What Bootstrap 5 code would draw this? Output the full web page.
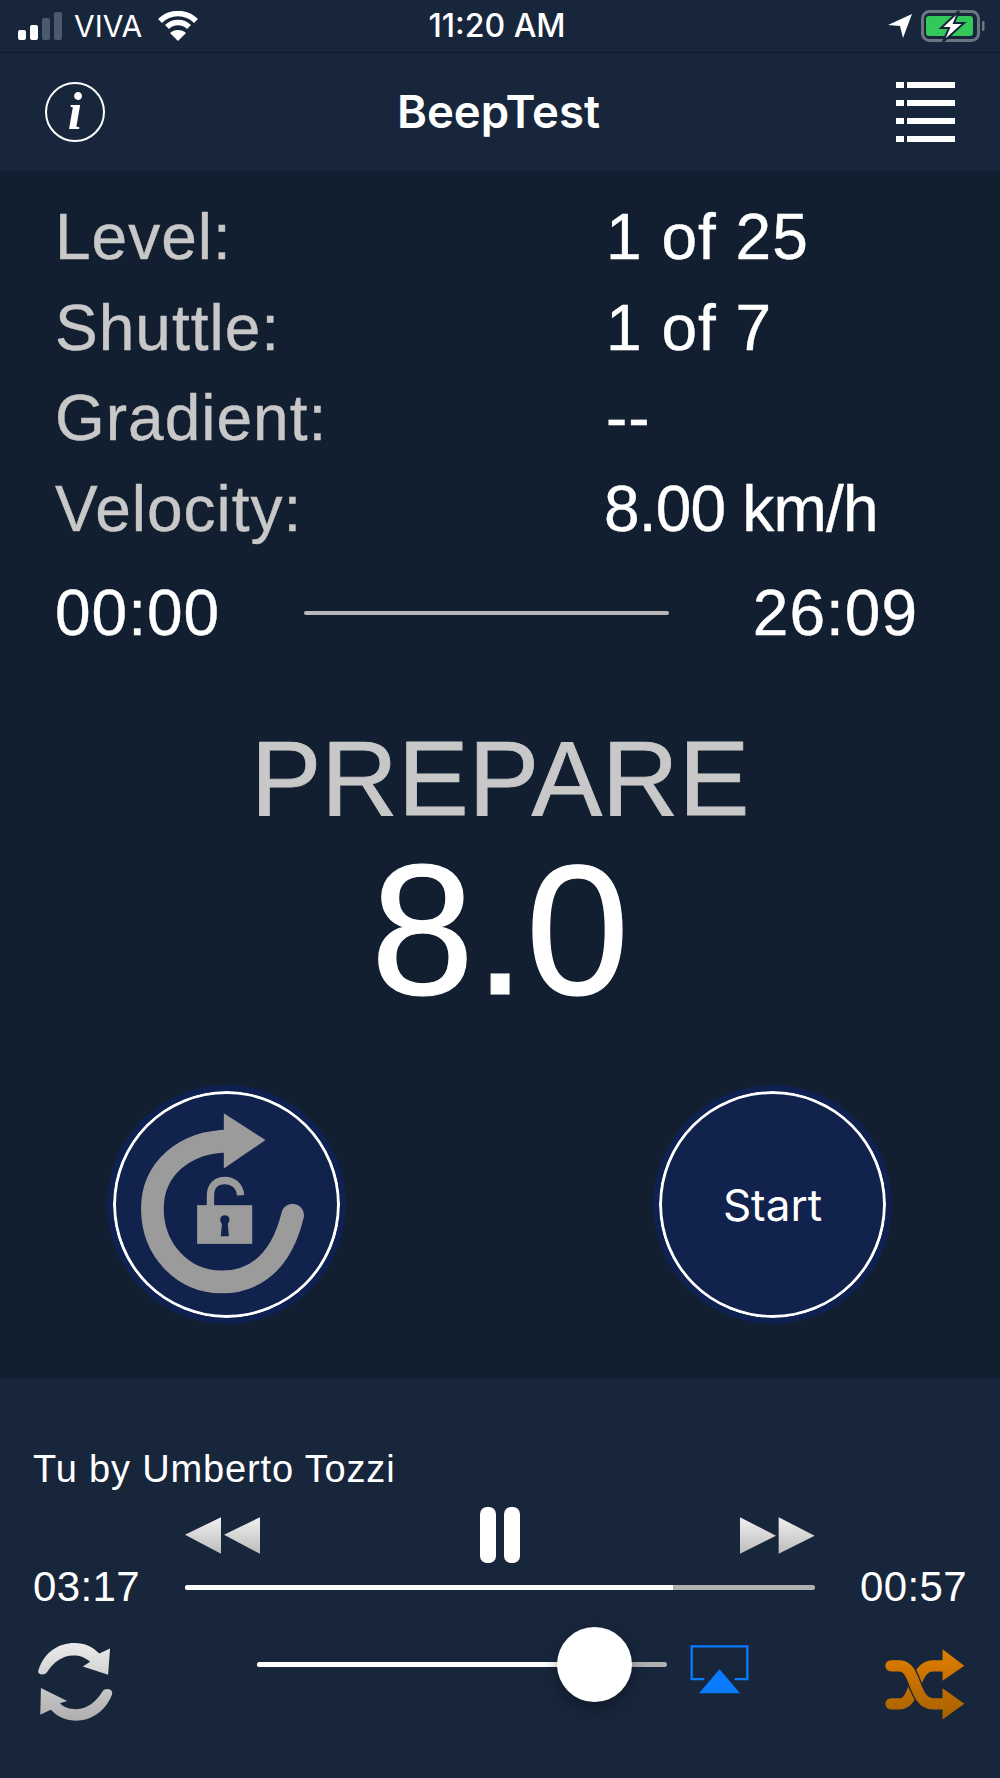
<!DOCTYPE html>
<html lang="en">
<head>
    <meta charset="UTF-8">
    <meta name="viewport" content="width=device-width, initial-scale=1.0">
    <title>BeepTest</title>
    <link rel="stylesheet" href="https://cdn.jsdelivr.net/npm/bootstrap@5.3.0/dist/css/bootstrap.min.css">
    <style>
        body { background: #121f31; color: #fff; font-family: "Liberation Sans", Arial, sans-serif; }
        .phone-shell { width: 1000px; height: 1778px; overflow: hidden; }
        .status-strip { height: 53px; background: #18263c; border-bottom: 1px solid #121d2c; padding: 0 15px 0 18px; font-family: Inter, sans-serif; font-size: 30px; }
        .status-side { width: 300px; }
        .status-clock { font-size: 32px; font-weight: 500; margin-right: 9px; }
        .signal-bars { gap: 4px; height: 28px; margin-right: 12px; }
        .signal-bars span { width: 8px; border-radius: 2px; background: #fff; }
        .signal-bars .off { background: #4c5a6d; }
        .app-bar { height: 118px; background: #18263c; padding: 0 45px; }
        .app-title { font-family: Inter, sans-serif; font-weight: 600; font-size: 45.5px; margin-left: -4px; }
        .info-glyph { width: 60px; height: 60px; border: 2px solid #fff; border-radius: 50%; font-family: "Liberation Serif", serif; font-style: italic; font-weight: 700; font-size: 52px; line-height: 1; }
        .menu-glyph { width: 59px; gap: 12.5px; }
        .menu-line { height: 5.5px; background: linear-gradient(to right, #fff 8px, transparent 8px, transparent 11px, #fff 11px); }
        .main-pane { height: 1207px; padding: 21px 82px 0 55px; }
        .stat-grid { display: grid; grid-template-columns: 551px 1fr; grid-auto-rows: 90.6px; align-items: center; font-size: 64px; line-height: 1; letter-spacing: 1px; -webkit-text-stroke: .4px; }
        .stat-name { color: #c8c8c8; }
        .stat-tight { letter-spacing: -.8px; margin-left: -2px; }
        .timer-line { height: 90px; margin-top: 14px; font-size: 64px; line-height: 1; letter-spacing: 1px; -webkit-text-stroke: .4px; }
        .timer-track { width: 365px; height: 4px; background: #b8b8b8; border-radius: 2px; }
        .phase-word { margin: 60px -82px 0 -55px; color: #c8c8c8; font-size: 106px; line-height: 120px; -webkit-text-stroke: .8px; }
        .pace-num { margin: 2px -82px 0 -55px; font-size: 186px; line-height: 180px; -webkit-text-stroke: 1.2px; }
        .round-row { margin: 65px -82px 0 -55px; padding: 0 108px 0 107px; }
        .round-btn { width: 239px; height: 239px; padding: 0; background: #11224d; border: 6px solid #0f2150; box-shadow: inset 0 0 0 3px #fff; color: #fff; font-family: Inter, sans-serif; font-size: 44px; }
        .round-btn:hover { background: #11224d; border-color: #0f2150; color: #fff; }
        .player-pane { height: 400px; background: #18263c; }
        .song-name { padding: 71px 0 0 33px; font-size: 38px; line-height: 40px; letter-spacing: .85px; }
        .player-grid { display: grid; grid-template-columns: 185px 630px 185px; }
        .transport-row { height: 56px; margin-top: 18px; }
        .pause-bar { width: 16px; height: 56px; background: #fff; border-radius: 7px; }
        .time-cell { font-size: 42px; line-height: 48px; letter-spacing: .4px; }
        .time-row { height: 48px; }
        .seek-bar { height: 5px; background: #b0b0b0; border-radius: 3px; overflow: visible; }
        .seek-bar .progress-bar { background: #fff; border-radius: 3px 0 0 3px; }
        .volume-row { height: 90px; margin-top: 27px; }
        .volume-box { width: 410px; margin-left: 72px; margin-top: -11px; }
        .volume-knob { position: absolute; left: 300px; top: -35px; width: 75px; height: 75px; border-radius: 50%; background: #fff; box-shadow: 0 6px 16px rgba(0,0,0,.35); }
        .airplay-box { margin: -28px 0 0 23px; }
        .loop-cell { padding: 0 0 2px 36px; }
        .mix-cell { padding: 3px 0 0 70px; }
    </style>
</head>
<body>
<div class="phone-shell d-flex flex-column">

    <div class="status-strip d-flex align-items-center justify-content-between">
        <div class="status-side d-flex align-items-center">
            <div class="signal-bars d-flex align-items-end">
                <span style="height: 10px"></span><span style="height: 15px"></span><span class="off" style="height: 22px"></span><span class="off" style="height: 28px"></span>
            </div>
            <span>VIVA</span>
            <svg class="ms-3" width="40" height="30" viewBox="0 0 40 30">
                <path d="M2 10 C12 0 28 0 38 10" fill="none" stroke="#fff" stroke-width="5.5"/>
                <path d="M9 16 C15 10 25 10 31 16" fill="none" stroke="#fff" stroke-width="5.5"/>
                <path d="M20 30 L12 22 C16 18 24 18 28 22 Z" fill="#fff"/>
            </svg>
        </div>
        <span class="status-clock">11:20 AM</span>
        <div class="status-side d-flex align-items-center justify-content-end">
            <svg class="me-2" width="26" height="26" viewBox="0 0 26 26"><path d="M1 12 L25 1 L16 25 L13 13 Z" fill="#fff"/></svg>
            <svg width="64" height="32" viewBox="0 0 64 32">
                <rect x="1.5" y="1.5" width="56" height="29" rx="7" fill="none" stroke="#6c7683" stroke-width="3"/>
                <rect x="5" y="6" width="47" height="20" rx="3" fill="#34c759"/>
                <rect x="61" y="11" width="2.5" height="10" rx="1" fill="#6c7683"/>
                <path d="M38 1 L20 18 L28 18 L22 32 L43 13 L33 13 Z" fill="#fff" stroke="#18263c" stroke-width="2"/>
            </svg>
        </div>
    </div>

    <nav class="navbar app-bar d-flex justify-content-between align-items-center flex-nowrap">
        <div class="info-glyph d-flex align-items-center justify-content-center">i</div>
        <span class="app-title">BeepTest</span>
        <div class="menu-glyph d-flex flex-column">
            <div class="menu-line"></div>
            <div class="menu-line"></div>
            <div class="menu-line"></div>
            <div class="menu-line"></div>
        </div>
    </nav>

    <main class="main-pane">
        <div class="stat-grid">
            <span class="stat-name">Level:</span><span>1 of 25</span>
            <span class="stat-name">Shuttle:</span><span>1 of 7</span>
            <span class="stat-name">Gradient:</span><span>--</span>
            <span class="stat-name">Velocity:</span><span class="stat-tight">8.00 km/h</span>
        </div>
        <div class="timer-line d-flex align-items-center justify-content-between">
            <span>00:00</span>
            <div class="timer-track"></div>
            <span>26:09</span>
        </div>
        <div class="phase-word text-center">PREPARE</div>
        <div class="pace-num text-center">8.0</div>
        <div class="round-row d-flex justify-content-between">
            <button type="button" class="btn round-btn rounded-circle d-flex" aria-label="Restart">
                <svg width="227" height="227" viewBox="70 63 680 680">
                    <path d="M420 213 C280 213 188 300 188 415 C188 540 280 635 395 635 C500 635 575 570 608 435" fill="none" stroke="#9b9b9b" stroke-width="68" stroke-linecap="round"/>
                    <path d="M402 130 L527 210 L402 295 Z" fill="#9b9b9b"/>
                    <path d="M362 408 V375 C362 347 380 331 405 331 C430 331 450 347 452 375" fill="none" stroke="#9b9b9b" stroke-width="22"/>
                    <rect x="322" y="405" width="165" height="116" fill="#9b9b9b"/>
                    <circle cx="405" cy="449" r="14" fill="#11224d"/>
                    <path d="M397 452 H413 L417 498 H393 Z" fill="#11224d"/>
                </svg>
            </button>
            <button type="button" class="btn round-btn rounded-circle">Start</button>
        </div>
    </main>

    <section class="player-pane">
        <div class="song-name">Tu by Umberto Tozzi</div>

        <div class="player-grid transport-row">
            <div></div>
            <div class="d-flex align-items-center justify-content-between">
                <svg width="75" height="37" viewBox="555 107 225 110">
                    <defs><linearGradient id="skipFill" x1="0" y1="0" x2="0" y2="1"><stop offset="0" stop-color="#f0f0f0"/><stop offset="1" stop-color="#bcbcbc"/></linearGradient></defs>
                    <path d="M555 160 L663 107 V217 Z M672 160 L780 107 V217 Z" fill="url(#skipFill)"/>
                </svg>
                <div class="d-flex gap-2">
                    <div class="pause-bar"></div>
                    <div class="pause-bar"></div>
                </div>
                <svg width="75" height="37" viewBox="720 107 225 110">
                    <path d="M720 107 L828 163 L720 217 Z M836 107 L944 163 L836 217 Z" fill="url(#skipFill)"/>
                </svg>
            </div>
            <div></div>
        </div>

        <div class="player-grid time-row align-items-center">
            <div class="time-cell" style="padding-left: 33px">03:17</div>
            <div class="progress seek-bar">
                <div class="progress-bar" style="width: 77.5%"></div>
            </div>
            <div class="time-cell" style="padding-left: 45px">00:57</div>
        </div>

        <div class="player-grid volume-row align-items-center">
            <div class="loop-cell">
                <svg width="78" height="82" viewBox="105 483 238 248">
                    <defs>
                        <linearGradient id="loopFill" gradientUnits="userSpaceOnUse" x1="0" y1="485" x2="0" y2="730"><stop offset="0" stop-color="#ececec"/><stop offset="1" stop-color="#adadad"/></linearGradient>
                        <linearGradient id="mixFill" gradientUnits="userSpaceOnUse" x1="0" y1="510" x2="0" y2="722"><stop offset="0" stop-color="#e07f00"/><stop offset="1" stop-color="#a86000"/></linearGradient>
                    </defs>
                    <path d="M112 572 C130 515 175 488 222 488 C255 488 278 500 298 520 L331 505 L325 585 L248 560 L270 545 C255 532 240 526 218 526 C185 526 155 550 138 578 C130 588 108 585 112 572 Z" fill="url(#loopFill)"/>
                    <path d="M337 645 C318 695 275 725 225 725 C192 725 170 712 150 692 L118 707 L120 625 L200 665 L178 672 C190 685 208 690 228 690 C262 690 290 665 308 636 C318 622 342 630 337 645 Z" fill="url(#loopFill)"/>
                </svg>
            </div>
            <div class="d-flex">
                <div class="volume-box position-relative">
                    <div class="progress seek-bar">
                        <div class="progress-bar" style="width: 82.4%"></div>
                    </div>
                    <div class="volume-knob"></div>
                </div>
                <svg class="airplay-box" width="59" height="49" viewBox="570 492 176 148">
                    <path d="M612 595 H574 V496 H742 V595 H704" fill="none" stroke="#0a7aff" stroke-width="7"/>
                    <path d="M658 565 L720 638 H596 Z" fill="#0a7aff"/>
                </svg>
            </div>
            <div class="mix-cell">
                <svg width="80" height="71" viewBox="1155 510 242 213">
                    <path d="M1173 675 H1200 C1250 675 1240 560 1300 560 H1345" fill="none" stroke="url(#mixFill)" stroke-width="34" stroke-linecap="round"/>
                    <path d="M1173 560 H1200 C1250 560 1240 675 1300 675 H1345" fill="none" stroke="#18263c" stroke-width="42"/>
                    <path d="M1173 560 H1200 C1250 560 1240 675 1300 675 H1345" fill="none" stroke="url(#mixFill)" stroke-width="34" stroke-linecap="round"/>
                    <path d="M1329 510 L1395 560 L1329 605 Z M1329 628 L1395 675 L1329 722 Z" fill="url(#mixFill)"/>
                </svg>
            </div>
        </div>
    </section>

</div>
<script src="https://cdn.jsdelivr.net/npm/bootstrap@5.3.0/dist/js/bootstrap.bundle.min.js"></script>
</body>
</html>
